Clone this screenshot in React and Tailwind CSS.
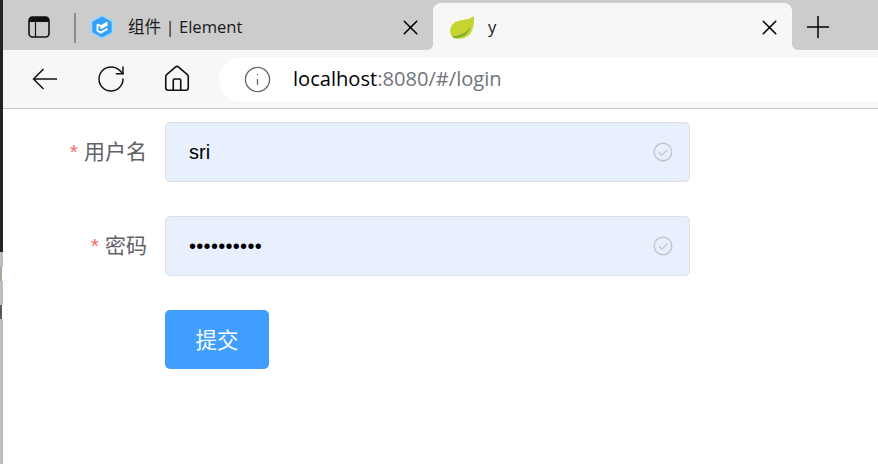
import { X, Plus, RotateCw, Home, Info } from "lucide-react";

const uiFont = { fontFamily: '"Open Sans", "Noto Sans CJK SC", sans-serif' };

const ElementLogo = () => (
  <svg width="24" height="26" viewBox="0 0 24 26">
    <path d="M12 1.500 22.500 7.200v11.600L12 24.500 1.500 18.800V7.200Z" fill="#35a0f8" stroke="#9bd6fc" strokeWidth="1.600" strokeLinejoin="round" />
    <path d="M17.500 8.500 11 12.200 7.500 10.300M7.500 10.300v6.400l3.300 1.900 6.700-3.800M10.500 14.500l7-3.900" fill="none" stroke="#fff" strokeWidth="1.900" />
  </svg>
);

const LeafLogo = () => (
  <svg width="26" height="25" viewBox="0 0 26 25">
    <path d="M25 1C25 6 25 14 21 19 17 24 8 24.500 4 23 0 19 0 12 5 8 10 4 19 6 25 1Z" fill="#c3d52e" />
    <path d="M4 21C10 21.500 17 18.500 21.500 12 20 18 14 23.500 5 23Z" fill="#74ab3c" />
  </svg>
);

const PanelIcon = () => (
  <svg width="22" height="22" viewBox="0 0 22 22">
    <rect x="1" y="1" width="20" height="20" rx="3.500" fill="none" stroke="#111" strokeWidth="1.600" />
    <path d="M1 4.500A3.500 3.500 0 0 1 4.500 1h13A3.500 3.500 0 0 1 21 4.500V6H1Z" fill="#111" />
    <path d="M7.500 6v15" stroke="#111" strokeWidth="1.200" />
  </svg>
);

const BackArrow = () => (
  <svg width="26" height="22" viewBox="0 0 26 22" className="ml-[29px] shrink-0">
    <path d="M25 11H2M11.500 1 1.500 11l10 10" fill="none" stroke="#111" strokeWidth="1.500" />
  </svg>
);

const CheckCircle = () => (
  <svg width="20" height="20" viewBox="0 0 20 20" className="shrink-0">
    <circle cx="10" cy="10" r="8.800" fill="none" stroke="#c0c4cc" strokeWidth="1.400" />
    <path d="M5.800 10.200 8.800 13.200 14.400 7.800" fill="none" stroke="#c0c4cc" strokeWidth="1.300" />
  </svg>
);

const Field = ({ label, children }) => (
  <div className="flex items-center h-[60px]">
    <div className="w-[144px] text-right text-[21px] text-[#606266]" style={{ fontFamily: '"Liberation Sans", "Noto Sans CJK SC", sans-serif' }}>
      <span className="text-[#f56c6c] mr-[6px]">*</span>
      {label}
    </div>
    <div className="ml-[18px] w-[525px] h-[60px] flex items-center justify-between pl-[23px] pr-[16px] bg-[#e8f0fe] border border-[#dcdfe6] rounded-[5px] text-[20px] text-black" style={{ fontFamily: '"Liberation Sans", sans-serif' }}>
      {children}
      <CheckCircle />
    </div>
  </div>
);

export default function App() {
  return (
    <div className="w-[878px] h-[464px] overflow-hidden bg-white flex">
      <div className="w-[3px] flex flex-col shrink-0">
        <div className="h-[252px] bg-[#232323]" />
        <div className="h-[15px] bg-[#bdbdbd]" />
        <div className="h-[14px] w-[2px] bg-[#b0a79c]" />
        <div className="h-[24px] bg-[#bdbdbd]" />
        <div className="h-[14px] w-[2px] bg-[#55585c]" />
        <div className="flex-1 bg-[#bdbdbd]" />
      </div>
      <div className="flex-1 flex flex-col min-w-0">
        <div className="h-[50px] bg-[#cccccc] flex items-end shrink-0 text-[#1a1a1a]" style={uiFont}>
          <div className="w-[71px] h-[50px] flex items-center justify-center pl-[1px] pt-[4px] shrink-0">
            <PanelIcon />
          </div>
          <div className="w-[2px] h-[30px] mb-[7px] bg-[#8a8a8a] shrink-0" />
          <div className="w-[357px] h-[47px] flex items-center pl-[14px] pr-[10px] pt-[1px] shrink-0">
            <ElementLogo />
            <span className="ml-[14px] text-[16.6px] flex-1">组件 | Element</span>
            <X size={25} strokeWidth={1.500} className="text-black" />
          </div>
          <div className="relative w-[359px] h-[47px] bg-[#f7f7f7] rounded-t-[8px] flex items-center pl-[16px] pr-[10px] pt-[1px] shrink-0">
            <div className="absolute left-[-6px] bottom-0 w-[6px] h-[6px] bg-[#f7f7f7]">
              <div className="w-full h-full bg-[#cccccc] rounded-br-[6px]" />
            </div>
            <div className="absolute right-[-6px] bottom-0 w-[6px] h-[6px] bg-[#f7f7f7]">
              <div className="w-full h-full bg-[#cccccc] rounded-bl-[6px]" />
            </div>
            <LeafLogo />
            <span className="ml-[13px] text-[16.6px] flex-1">y</span>
            <X size={25} strokeWidth={1.500} className="text-black" />
          </div>
          <div className="flex-1 h-[47px] flex items-center pl-[8px]">
            <Plus size={36} strokeWidth={1} className="text-black" />
          </div>
        </div>
        <div className="h-[59px] bg-[#f7f7f7] border-b border-[#c6c6c6] flex items-center shrink-0" style={uiFont}>
          <BackArrow />
          <RotateCw size={32} strokeWidth={1.100} className="ml-[37px] text-[#111] shrink-0" />
          <Home size={30} strokeWidth={1.300} className="ml-[35px] text-[#111] shrink-0" />
          <div className="ml-[27px] flex-1 h-[45px] bg-white rounded-l-[23px] flex items-center pl-[24px]">
            <Info size={29} strokeWidth={1.100} className="text-[#666] shrink-0" />
            <span className="ml-[21px] text-[20.1px] text-black">
              localhost<span className="text-[#70757a]">:8080/#/login</span>
            </span>
          </div>
        </div>
        <div className="flex-1 flex flex-col gap-[34px] pt-[13px] pl-0">
          <Field label="用户名">
            <span>sri</span>
          </Field>
          <Field label="密码">
            <span className="tracking-[0.3px]">••••••••••</span>
          </Field>
          <div className="pl-[162px]">
            <button className="w-[104px] h-[59px] bg-[#409eff] rounded-[5px] text-white text-[21.5px]" style={{ fontFamily: '"Noto Sans CJK SC", sans-serif' }}>
              提交
            </button>
          </div>
        </div>
      </div>
    </div>
  );
}
